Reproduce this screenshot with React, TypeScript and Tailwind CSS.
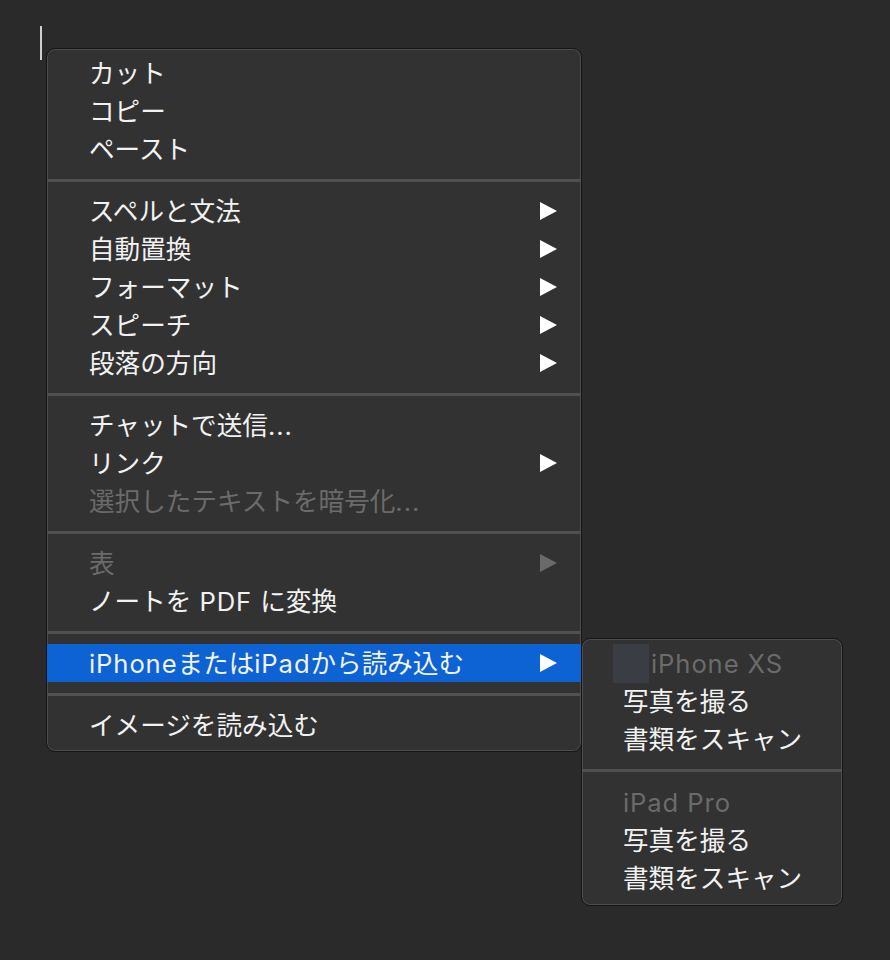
import React from "react";

type Item =
  | { kind: "item"; label: string; arrow?: boolean; disabled?: boolean; selected?: boolean }
  | { kind: "sep" };

const mainItems: Item[] = [
  { kind: "item", label: "カット" },
  { kind: "item", label: "コピー" },
  { kind: "item", label: "ペースト" },
  { kind: "sep" },
  { kind: "item", label: "スペルと文法", arrow: true },
  { kind: "item", label: "自動置換", arrow: true },
  { kind: "item", label: "フォーマット", arrow: true },
  { kind: "item", label: "スピーチ", arrow: true },
  { kind: "item", label: "段落の方向", arrow: true },
  { kind: "sep" },
  { kind: "item", label: "チャットで送信..." },
  { kind: "item", label: "リンク", arrow: true },
  { kind: "item", label: "選択したテキストを暗号化...", disabled: true },
  { kind: "sep" },
  { kind: "item", label: "表", arrow: true, disabled: true },
  { kind: "item", label: "ノートを PDF に変換" },
  { kind: "sep" },
  { kind: "item", label: "iPhoneまたはiPadから読み込む", arrow: true, selected: true },
  { kind: "sep" },
  { kind: "item", label: "イメージを読み込む" },
];

function Label({ text }: { text: string }) {
  const parts = text.split(/([A-Za-z. ]+)/).filter((p) => p.length > 0);
  return (
    <span className="whitespace-nowrap pt-[2px]">
      {parts.map((p, i) =>
        /^[A-Za-z. ]+$/.test(p) ? (
          <span key={i} className="tracking-[0.9px]">
            {p}
          </span>
        ) : (
          <span key={i}>{p}</span>
        )
      )}
    </span>
  );
}

function Arrow({ disabled }: { disabled?: boolean }) {
  return (
    <svg width="18" height="18" viewBox="0 0 18 18" className="shrink-0">
      <polygon points="1,0 18,9 1,18" fill={disabled ? "#6a6a6a" : "#ffffff"} />
    </svg>
  );
}

function Separator({ top = 11, bottom = 10 }: { top?: number; bottom?: number }) {
  return (
    <div style={{ paddingTop: top, paddingBottom: bottom }}>
      <div className="h-[3px] bg-[#505050]" />
    </div>
  );
}

function Row({ item }: { item: Extract<Item, { kind: "item" }> }) {
  return (
    <div
      className={
        "h-[38px] flex items-center pl-[42px] pr-[24px] " +
        (item.selected ? "bg-[#0d63d4] " : "") +
        (item.disabled ? "text-[#6b6b6b]" : "text-[#f2f2f2]")
      }
    >
      <div className="flex-1 flex">
        <Label text={item.label} />
      </div>
      {item.arrow ? <Arrow disabled={item.disabled} /> : null}
    </div>
  );
}

function SubRow({ text, disabled }: { text: string; disabled?: boolean }) {
  return (
    <div
      className={
        "h-[38px] flex items-center pl-[41px] " + (disabled ? "text-[#6b6b6b]" : "text-[#f2f2f2]")
      }
    >
      <Label text={text} />
    </div>
  );
}

export default function App() {
  return (
    <div
      className="relative w-[890px] h-[960px] bg-[#2a2a2a] overflow-hidden pl-[46px] pt-[48px]"
      style={{ fontFamily: 'Inter, "Noto Sans CJK JP", sans-serif' }}
    >
      <div className="absolute left-[40px] top-[26px] w-[2px] h-[34px] bg-[#cfcfcf]" />
      <div className="relative w-[536px] text-[25.6px] leading-none">
        <div className="rounded-[9px] border border-[#161616] bg-[#323232] pt-[5px] pb-[7px] shadow-[inset_0_0_0_1px_rgba(255,255,255,0.13)] overflow-hidden">
          {mainItems.map((it, i) =>
            it.kind === "sep" ? <Separator key={i} /> : <Row key={i} item={it} />
          )}
        </div>
        <div className="absolute left-[535px] top-[590px] w-[262px] rounded-[9px] border border-[#161616] bg-[#323232] pt-[5px] pb-[8px] shadow-[inset_0_0_0_1px_rgba(255,255,255,0.13)] overflow-hidden">
          <div className="h-[38px] flex items-center pl-[31px] text-[#6b6b6b]">
            <div className="w-[36px] h-[39px] bg-[#3a3d44] mr-[2px]" />
            <Label text="iPhone XS" />
          </div>
          <SubRow text="写真を撮る" />
          <SubRow text="書類をスキャン" />
          <Separator top={11} bottom={11} />
          <SubRow text="iPad Pro" disabled />
          <SubRow text="写真を撮る" />
          <SubRow text="書類をスキャン" />
        </div>
      </div>
    </div>
  );
}
